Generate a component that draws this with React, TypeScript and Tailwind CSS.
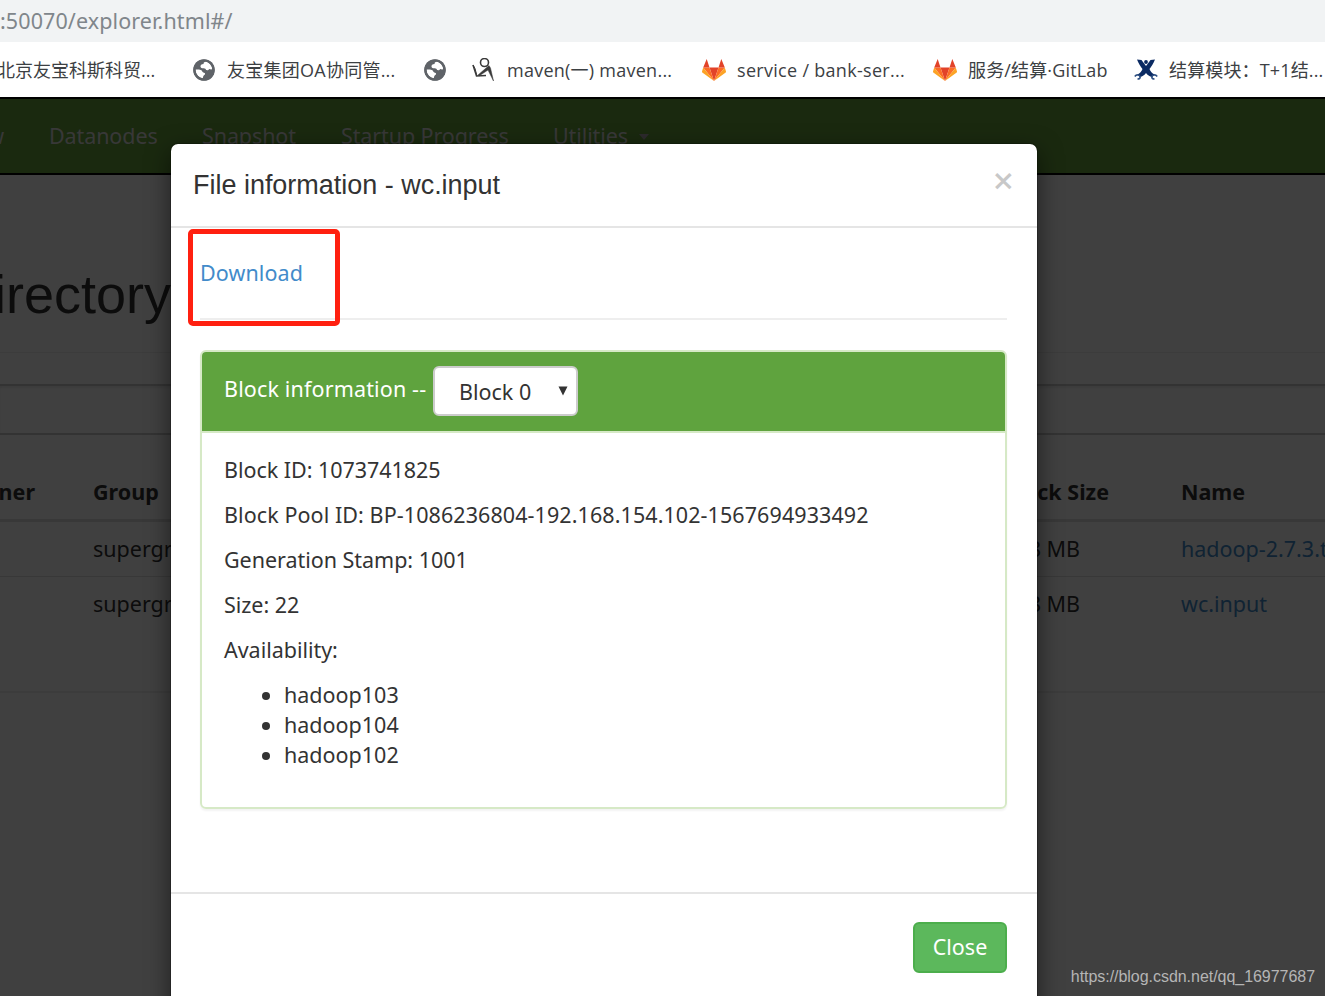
import type { ReactNode } from "react";

const GlobeIcon = () => (
  <svg viewBox="0 0 22 22" className="size-[22px] shrink-0">
    <circle cx="11" cy="11" r="10.8" fill="#5f6368" />
    <path
      d="M13 2.400c-2 .6-2.800 1.500-2.300 2.600-2.300 0-3.500 1.200-3.200 2.700.3 1.300 1.600 1.700 3.200 1.600 1.500 0 2.100.8 2.300 1.800 1.500.4 2.600 0 3.200-1.200.8.4 1.800.6 2.900.4A8.600 8.600 0 0 0 13 2.400z"
      fill="#fff"
    />
    <path
      d="M2.400 10.600c2.600-.3 4.900-.2 6 .6 1.100.9.8 2.200 2.500 2.500 1.200.2 1.600 1.300.7 2.100-1.100.7-1.700 1.800-1.700 3.500A8.600 8.600 0 0 1 2.400 10.600z"
      fill="#fff"
    />
    <circle cx="11" cy="11" r="9.500" fill="none" stroke="#5f6368" strokeWidth="2.200" />
  </svg>
);

const StickmanIcon = () => (
  <svg viewBox="0 0 24 24" className="size-6 shrink-0" fill="none" stroke="#3a3a3a">
    <circle cx="12.500" cy="4.500" r="4" strokeWidth="1.600" />
    <path d="M1 7l3.500 11L14 17.500" strokeWidth="1.500" />
    <path d="M1 7l2 3.500 2 7.500" strokeWidth="1" />
    <path d="M6 17l11-9.500L18.500 10l3 13-4.500-9-1-2-9 6z" fill="#3a3a3a" strokeWidth="0.500" />
  </svg>
);

const GitlabIcon = () => (
  <svg viewBox="0 0 24 22" className="h-[22px] w-6 shrink-0">
    <path d="M12 22L7.500 8.500h9z" fill="#e24329" />
    <path d="M12 22L7.500 8.500H1.200zM12 22l4.500-13.500h6.300z" fill="#fc6d26" />
    <path d="M1.200 8.500L0 12.500c-.1.400 0 .8.300 1L12 22zM22.800 8.500l1.200 4c.1.400 0 .8-.3 1L12 22z" fill="#fca326" />
    <path d="M1.200 8.500h6.300L4.700 0zM22.800 8.500h-6.300L19.300 0z" fill="#e24329" />
  </svg>
);

const JiraIcon = () => (
  <svg viewBox="0 0 24 22" className="h-[22px] w-6 shrink-0" fill="#0b2b63">
    <path d="M3 .5l4.500.5 4.500 6 4.500-6L21 .5c-1.500 4-3.500 7-5.500 9.500 1 2.500 2.500 4.500 5 5.500L18 18c-2.500-.5-4.500-2-6-4-1.500 2-3.500 3.500-6 4l-2.500-2.500c2.500-1 4-3 5-5.500C6.500 7.500 4.500 4.500 3 .5z" />
    <circle cx="12" cy="3" r="1.900" />
    <path d="M.8 17.500c2-2.500 4.500-1.500 5.200 0 .5 1.500-.5 2.500-2.500 2.500M23.200 17.500c-2-2.500-4.500-1.500-5.200 0-.5 1.500.5 2.500 2.500 2.500" fill="none" stroke="#2f5083" strokeWidth="1.700" />
  </svg>
);

function Bookmark({ icon, label, className }: { icon?: ReactNode; label?: string; className: string }) {
  return (
    <div className={`flex shrink-0 items-center whitespace-nowrap ${className}`}>
      {icon}
      {label && <span>{label}</span>}
    </div>
  );
}

const BLOCK_ROWS = [
  "Block ID: 1073741825",
  "Block Pool ID: BP-1086236804-192.168.154.102-1567694933492",
  "Generation Stamp: 1001",
  "Size: 22",
  "Availability:",
];

const HOSTS = ["hadoop103", "hadoop104", "hadoop102"];

function BrowserChrome() {
  return (
    <>
      <div className="flex h-[42px] items-center bg-[#f1f3f4] text-[21.5px] tracking-[0.1px] text-[#80868b]">
        <span>:50070/explorer.html#/</span>
      </div>
      <div className="flex h-[55px] items-center bg-white font-['Open_Sans','Noto_Sans_CJK_SC',sans-serif] text-[18px] text-[#3c4043]">
        <Bookmark className="-ml-[3px] w-[196px]" label="北京友宝科斯科贸..." />
        <Bookmark className="w-[231px] gap-3 tracking-[0.25px]" icon={<GlobeIcon />} label="友宝集团OA协同管..." />
        <Bookmark className="w-[48px]" icon={<GlobeIcon />} />
        <Bookmark className="w-[230px] gap-[11px] tracking-[0.25px]" icon={<StickmanIcon />} label="maven(一) maven..." />
        <Bookmark className="w-[231px] gap-[11px] tracking-[0.3px]" icon={<GitlabIcon />} label="service / bank-ser..." />
        <Bookmark className="w-[201px] gap-[11px] tracking-[0.15px]" icon={<GitlabIcon />} label="服务/结算·GitLab" />
        <Bookmark className="gap-[11px] tracking-[0.15px]" icon={<JiraIcon />} label="结算模块：T+1结..." />
      </div>
    </>
  );
}

function Explorer() {
  return (
    <div className="h-full bg-white text-[#333]">
      <nav className="flex h-[78px] items-center border-y-2 border-black bg-[#67a23f] tracking-[-0.1px] whitespace-nowrap text-[#ddd]">
        <span className="flex w-[49px] shrink-0"><span className="flex w-[4px] justify-end">Overview</span></span>
        <span className="w-[153px] shrink-0">Datanodes</span>
        <span className="w-[139px] shrink-0">Snapshot</span>
        <span className="w-[212px] shrink-0">Startup Progress</span>
        <span className="flex items-center gap-[11px]">
          Utilities
          <span className="mt-[2px] border-x-[5px] border-t-[6px] border-x-transparent border-t-[#b0a8b0]" />
        </span>
      </nav>
      <div className="flex h-[178px] items-end border-b border-[#eee]">
        <h1 className="flex w-[171px] justify-end pb-[28px] font-['Liberation_Sans',Arial,sans-serif] text-[54px] leading-[60px] whitespace-nowrap">
          Browse Directory
        </h1>
      </div>
      <div className="mt-[31px] h-[51px] border-y-2 border-[#ccc] shadow-[inset_0_2px_2px_rgba(0,0,0,0.08)]" />
      <div className="mt-[30px] h-[226px]">
        <div className="flex h-[57px] items-center border-b-[3px] border-[#ddd] font-bold whitespace-nowrap">
          <span className="flex w-[93px] shrink-0"><span className="flex w-[35px] justify-end">Owner</span></span>
          <span className="flex w-[1016px] shrink-0 justify-between"><span>Group</span><span>Block Size</span></span>
          <span className="ml-[72px]">Name</span>
        </div>
        {["hadoop-2.7.3.tar.gz", "wc.input"].map(name => (
          <div key={name} className="flex h-[55px] items-center border-b border-[#ddd] whitespace-nowrap last:border-white">
            <span className="ml-[93px] w-[200px] shrink-0">supergroup</span>
            <span className="flex w-[787px] shrink-0 justify-end">128 MB</span>
            <span className="ml-[101px] text-[#428bca]">{name}</span>
          </div>
        ))}
      </div>
      <div className="h-[2px] bg-[#eee]" />
    </div>
  );
}

function FileInfoModal() {
  return (
    <div className="absolute top-[46px] left-[170px] w-[868px] rounded-[8px] border border-black/20 bg-white bg-clip-padding text-[#333] shadow-[0_8px_23px_rgba(0,0,0,0.5)]">
      <div className="flex h-[84px] items-center justify-between border-b-2 border-[#e5e5e5] px-[22px]">
        <h4 className="font-['Liberation_Sans',Arial,sans-serif] text-[27px] tracking-[-0.02px]">File information - wc.input</h4>
        <button className="mr-[1px] mb-[11px] text-[37px] leading-none font-medium text-[#c8c8c8]">×</button>
      </div>

      <div className="h-[666px] border-b-2 border-[#e5e5e5] pt-[30px] pr-[30px] pl-[29px]">
        <a className="block tracking-[0.1px] text-[#428bca]">Download</a>
        <hr className="mt-[30px] mb-[30px] border-t-2 border-[#eee]" />
        <div className="rounded-[6px] border-2 border-[#d6e9c6] shadow-[0_2px_2px_rgba(0,0,0,0.05)]">
          <div className="flex h-[81px] items-center gap-[7px] rounded-t-[4px] border-b-2 border-[#d6e9c6] bg-[#5fa33e] px-[22px] text-white">
            <span className="mb-[5px] w-[202px] shrink-0 tracking-[0.15px] whitespace-nowrap">Block information --</span>
            <div className="mb-[2px] flex h-[50px] w-[145px] items-center justify-between rounded-[6px] border-2 border-[#ccc] bg-white pr-[8px] pl-[24px] text-[#333]">
              <span className="mt-[2px]">Block 0</span>
              <svg viewBox="0 0 10 10" className="size-[10px]">
                <path d="M0.500 0.500h9L5 9.500z" fill="#333" />
              </svg>
            </div>
          </div>
          <div className="flex flex-col gap-[15px] px-[22px] pt-[22px] pb-[37px]">
            {BLOCK_ROWS.map(row => (
              <p key={row} className={row.startsWith("Block Pool") ? "tracking-[0.08px]" : "tracking-[-0.03px]"}>{row}</p>
            ))}
            <ul className="list-disc pl-[60px]">
              {HOSTS.map(host => <li key={host}>{host}</li>)}
            </ul>
          </div>
        </div>
      </div>

      <div className="flex h-[130px] items-start justify-end px-[30px] pt-[28px]">
        <button className="h-[51px] w-[94px] rounded-[6px] border-2 border-[#4cae4c] bg-[#5cb85c] pb-[2px] text-white">Close</button>
      </div>

      {/* highlight around the download link */}
      <div className="absolute top-[85px] left-[17px] h-[97px] w-[152px] rounded-[5px] border-[5px] border-[#ff2010]" />
    </div>
  );
}

export default function App() {
  return (
    <div className="flex h-[996px] w-[1325px] flex-col overflow-hidden font-['Noto_Sans',sans-serif] text-[21.5px] leading-[30px]">
      <BrowserChrome />
      <main className="relative min-h-0 flex-1 overflow-hidden">
        <Explorer />
        <div className="absolute inset-0 bg-black/75" />
        <FileInfoModal />
        <span className="absolute right-[10px] bottom-[7px] font-['Liberation_Sans',Arial,sans-serif] text-[16px] leading-6 tracking-[-0.04px] text-[#b5b5b5]">
          https://blog.csdn.net/qq_16977687
        </span>
      </main>
    </div>
  );
}
